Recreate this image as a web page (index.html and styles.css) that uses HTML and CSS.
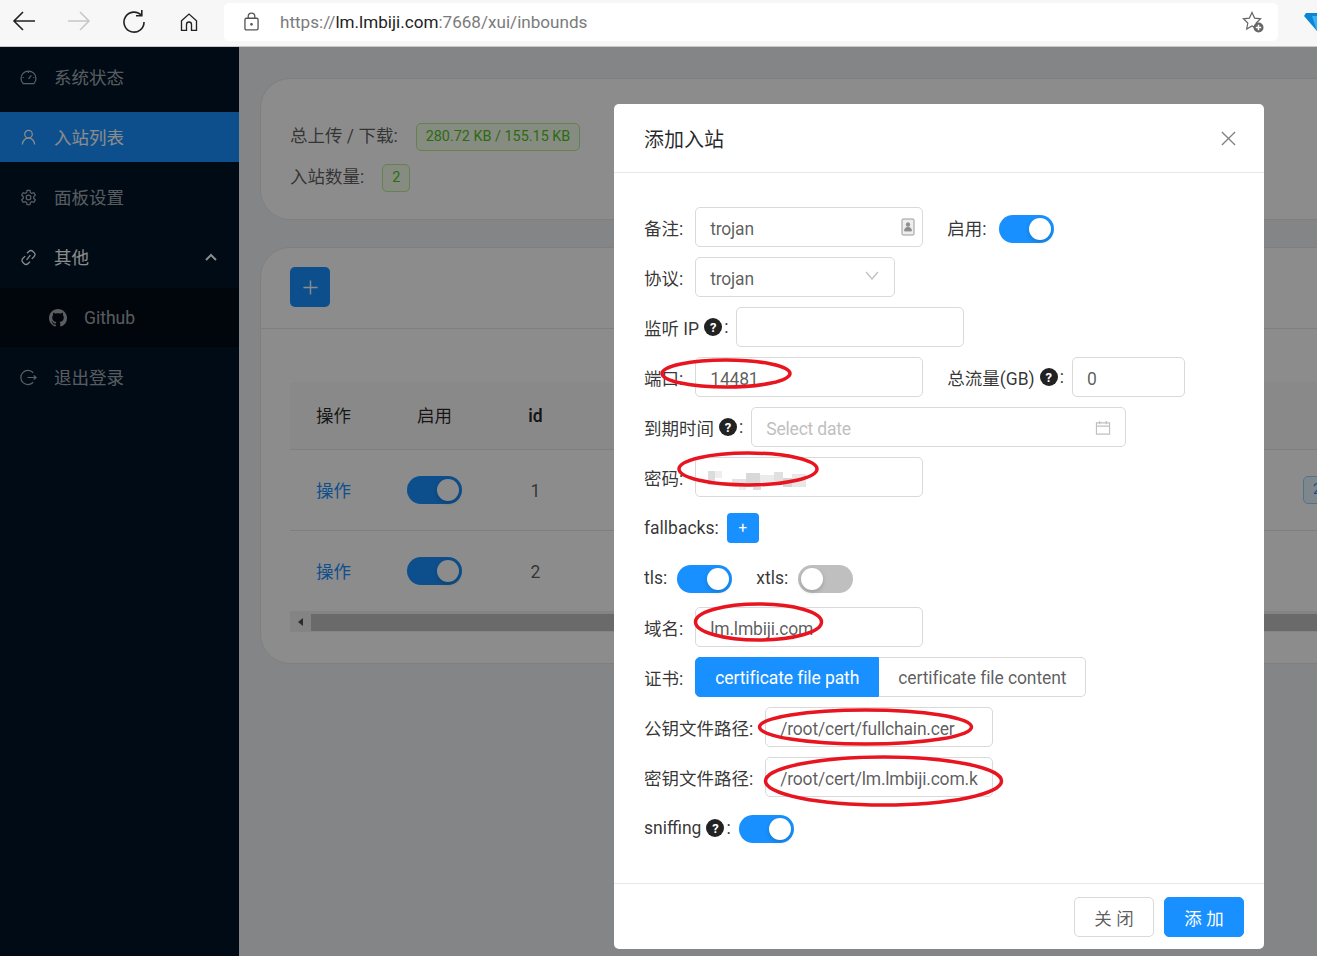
FILE: index.html
```html
<!DOCTYPE html>
<html lang="zh-CN">
<head>
  <meta charset="UTF-8">
  <meta name="viewport" content="width=device-width, initial-scale=1.0">
  <link rel="stylesheet" href="styles.css">
</head>
<body>
  <header class="browser-bar">
    <svg class="nav-icon nav-back" viewBox="0 0 24 24"><path d="M23 11H2M11 2l-9 9 9 9"/></svg>
    <svg class="nav-icon nav-forward" viewBox="0 0 24 24"><path d="M1 11h21M13 2l9 9-9 9"/></svg>
    <svg class="nav-icon nav-reload" viewBox="0 0 24 24"><path d="M19.5 5.5A10 10 0 1 0 22 12"/><path d="M14 5.8h5.8V0"/></svg>
    <svg class="nav-icon nav-home" viewBox="0 0 24 24"><path d="M3 10.5 12 2.5l9 8V22h-6v-7a3 3 0 0 0-6 0v7H3z"/></svg>
    <div class="address">
      <svg class="lock" viewBox="0 0 16 20"><rect x="1" y="6.5" width="14" height="12.5" rx="1.5"/><path d="M4.5 6.5V4.5a3.5 3.5 0 0 1 7 0v2"/><circle cx="8" cy="13" r=".8"/></svg>
      <span class="url">https://<b>lm.lmbiji.com</b>:7668/xui/inbounds</span>
      <svg class="fav" viewBox="0 0 22 22"><path d="M10 1.5l2.6 5.6 6 .7-4.4 4.2 1.1 6-5.3-3-5.3 3 1.1-6L1.4 7.800l6-.7z"/><circle class="fav-dot" cx="16.500" cy="16.500" r="5"/><path class="fav-plus" d="M16.500 13.800v5.400M13.800 16.500h5.400"/></svg>
    </div>
    <svg class="ext" viewBox="0 0 26 18"><path d="M2 0h22l2 3-13 15L0 3z"/><path class="ext-light" d="M8 3h10l-5 15z"/></svg>
  </header>

  <div class="app">
    <aside class="sider">
      <a class="menu-item">
        <svg class="menu-icon" viewBox="0 0 18 18"><path d="M3.300 15.500a7.900 7.900 0 1 1 11.400 0z"/><path d="M9 10.500l3-3.800M9 3v1.200M2.800 9H4M14 9h1.200"/></svg>
        <span>系统状态</span>
      </a>
      <a class="menu-item active">
        <svg class="menu-icon" viewBox="0 0 18 18"><circle cx="9" cy="5.500" r="4"/><path d="M2.500 16.500c0-3.600 2.900-7 6.500-7s6.500 3.400 6.500 7"/></svg>
        <span>入站列表</span>
      </a>
      <a class="menu-item">
        <svg class="menu-icon" viewBox="0 0 18 18"><path d="M7.500 1.500h3l.5 2.300 1.500.9 2.200-.7 1.500 2.600-1.700 1.600v1.600l1.700 1.600-1.500 2.600-2.200-.7-1.500.9-.5 2.300h-3l-.5-2.300-1.500-.9-2.200.7-1.500-2.600 1.700-1.600V8.200L1.800 6.600l1.500-2.600 2.200.7 1.500-.9z"/><circle cx="9" cy="9" r="2.500"/></svg>
        <span>面板设置</span>
      </a>
      <a class="menu-item open">
        <svg class="menu-icon" viewBox="0 0 18 18"><path d="M7.500 4.500l1.800-1.800a3.200 3.200 0 0 1 4.500 0l1 1a3.200 3.200 0 0 1 0 4.500l-2.300 2.300"/><path d="M10.500 13.500l-1.800 1.800a3.200 3.200 0 0 1-4.500 0l-1-1a3.200 3.200 0 0 1 0-4.500l2.300-2.300"/><path d="M7 11.500l4-5"/></svg>
        <span>其他</span>
        <svg class="chevron" viewBox="0 0 12 8"><path d="M1 7l5-5 5 5"/></svg>
      </a>
      <div class="submenu">
        <a class="menu-item sub-item">
          <svg class="menu-icon github" viewBox="0 0 16 16"><path d="M8 0C3.580 0 0 3.580 0 8c0 3.540 2.290 6.530 5.470 7.590.4.070.55-.17.55-.38 0-.19-.01-.82-.01-1.490-2.010.37-2.530-.49-2.690-.94-.09-.23-.48-.94-.82-1.130-.28-.15-.68-.52-.01-.53.63-.01 1.080.58 1.230.82.72 1.210 1.870.87 2.330.66.070-.52.28-.87.51-1.070-1.780-.2-3.640-.89-3.640-3.950 0-.87.31-1.590.82-2.150-.08-.2-.36-1.020.08-2.120 0 0 .67-.21 2.200.82.64-.18 1.320-.27 2-.27s1.360.09 2 .27c1.530-1.040 2.200-.82 2.200-.82.44 1.100.16 1.920.08 2.120.51.56.82 1.270.82 2.150 0 3.070-1.870 3.750-3.650 3.950.29.25.54.73.54 1.480 0 1.070-.01 1.930-.01 2.200 0 .21.15.46.55.38A8.013 8.013 0 0 0 16 8c0-4.420-3.580-8-8-8z"/></svg>
          <span>Github</span>
        </a>
      </div>
      <a class="menu-item">
        <svg class="menu-icon" viewBox="0 0 18 18"><path d="M14 4a7.500 7.500 0 1 0 0 10"/><path d="M8 9h9M14.500 6.800 17 9l-2.500 2.200"/></svg>
        <span>退出登录</span>
      </a>
    </aside>

    <main class="content">
      <section class="card stats">
        <div class="stat-row first"><span>总上传 / 下载:</span><span class="tag tag-green">280.72 KB / 155.15 KB</span></div>
        <div class="stat-row"><span>入站数量:</span><span class="tag tag-green">2</span></div>
      </section>

      <section class="card">
        <div class="card-head"><button class="add-btn"><svg viewBox="0 0 18 18"><path d="M9 1.500v15M1.500 9h15"/></svg></button></div>
        <div class="card-body">
          <div class="table-row table-head">
            <span>操作</span><span>启用</span><span class="cell-id">id</span>
          </div>
          <div class="table-row">
            <a class="link">操作</a><span class="cell-switch"><i class="switch on"></i></span><span class="cell-num">1</span><span class="cell-tag"><span class="tag tag-blue">2</span></span>
          </div>
          <div class="table-row">
            <a class="link">操作</a><span class="cell-switch"><i class="switch on"></i></span><span class="cell-num">2</span>
          </div>
          <div class="scrollbar">
            <span class="scroll-arrow"></span>
            <span class="scroll-thumb"></span>
          </div>
        </div>
      </section>
    </main>

    <div class="mask">
      <div class="modal">
        <div class="modal-head">
          <h2>添加入站</h2>
          <svg class="close" viewBox="0 0 16 16"><path d="M1 1l14 14M15 1 1 15"/></svg>
        </div>
        <form class="modal-body">
          <div class="form-row">
            <div class="form-item">
              <label class="cjk">备注:</label>
              <div class="field w228">
                <input type="text" value="trojan">
                <svg class="contact" viewBox="0 0 14 18"><rect x="1" y="1" width="12" height="16" rx="1"/><circle cx="7" cy="6.500" r="1.800"/><path d="M3.500 13c0-2.500 1.500-4 3.500-4s3.500 1.500 3.500 4z"/></svg>
              </div>
            </div>
            <div class="form-item">
              <label class="cjk">启用:</label>
              <i class="switch on"></i>
            </div>
          </div>
          <div class="form-row">
            <div class="form-item">
              <label class="cjk">协议:</label>
              <div class="field w200 select">
                <span>trojan</span>
                <svg class="arrow" viewBox="0 0 14 9"><path d="M1 1l6 7 6-7"/></svg>
              </div>
            </div>
          </div>
          <div class="form-row">
            <div class="form-item">
              <label class="tight">监听 IP<span class="help">?</span>:</label>
              <div class="field w228"><input type="text"></div>
            </div>
          </div>
          <div class="form-row">
            <div class="form-item">
              <label class="cjk">端口:</label>
              <div class="field w228"><input type="text" value="14481"></div>
            </div>
            <div class="form-item">
              <label class="tight">总流量(GB)<span class="help">?</span>:</label>
              <div class="field w113"><input type="text" value="0"></div>
            </div>
          </div>
          <div class="form-row">
            <div class="form-item">
              <label class="tight">到期时间<span class="help">?</span>:</label>
              <div class="field w375">
                <input type="text" placeholder="Select date">
                <svg class="calendar" viewBox="0 0 16 16"><path d="M1 3h14v12H1zM1 6.500h14M4.500 1v3.500M11.500 1v3.500"/></svg>
              </div>
            </div>
          </div>
          <div class="form-row">
            <div class="form-item">
              <label class="cjk">密码:</label>
              <div class="field w228">
                <input type="text">
                <svg class="mosaic" viewBox="0 0 98 21">
                  <rect x="0" y="2" width="7" height="14" fill="#dcdcdc"/>
                  <rect x="7" y="2" width="7" height="7" fill="#eeeeee"/>
                  <rect x="24" y="10" width="14" height="7" fill="#e2e2e2"/>
                  <rect x="31" y="14" width="7" height="7" fill="#ededed"/>
                  <rect x="38" y="4" width="14" height="14" fill="#d8d8d8"/>
                  <rect x="45" y="14" width="8" height="7" fill="#dddddd"/>
                  <rect x="52" y="6" width="14" height="9" fill="#ebebeb"/>
                  <rect x="66" y="3" width="9" height="9" fill="#e0e0e0"/>
                  <rect x="75" y="9" width="9" height="9" fill="#d5d5d5"/>
                  <rect x="84" y="5" width="14" height="13" fill="#e7e7e7"/>
                </svg>
              </div>
            </div>
          </div>
          <div class="form-row">
            <div class="form-item">
              <label class="latin tight">fallbacks:</label>
              <button type="button" class="mini-btn">+</button>
            </div>
          </div>
          <div class="form-row">
            <div class="form-item">
              <label class="latin">tls:</label>
              <i class="switch on"></i>
            </div>
            <div class="form-item">
              <label class="latin">xtls:</label>
              <i class="switch"></i>
            </div>
          </div>
          <div class="form-row">
            <div class="form-item">
              <label class="cjk">域名:</label>
              <div class="field w228"><input type="text" value="lm.lmbiji.com"></div>
            </div>
          </div>
          <div class="form-row">
            <div class="form-item">
              <label class="cjk">证书:</label>
              <div class="radio-group">
                <span class="radio active">certificate file path</span>
                <span class="radio">certificate file content</span>
              </div>
            </div>
          </div>
          <div class="form-row">
            <div class="form-item">
              <label class="cjk">公钥文件路径:</label>
              <div class="field w228"><input type="text" value="/root/cert/fullchain.cer"></div>
            </div>
          </div>
          <div class="form-row">
            <div class="form-item">
              <label class="cjk">密钥文件路径:</label>
              <div class="field w228"><input type="text" value="/root/cert/lm.lmbiji.com.key"></div>
            </div>
          </div>
          <div class="form-row">
            <div class="form-item">
              <label class="latin tight">sniffing<span class="help">?</span>:</label>
              <i class="switch on"></i>
            </div>
          </div>
        </form>
        <div class="modal-foot">
          <button class="btn">关 闭</button>
          <button class="btn btn-primary">添 加</button>
        </div>
      </div>
    </div>
  </div>

  <svg class="marks" viewBox="0 0 1317 956">
    <ellipse cx="726" cy="373.500" rx="64" ry="13.500"/>
    <ellipse cx="748" cy="469" rx="69" ry="16"/>
    <ellipse cx="758.500" cy="622" rx="63" ry="18"/>
    <ellipse cx="865.500" cy="727" rx="106" ry="17"/>
    <ellipse cx="883.500" cy="781" rx="118" ry="24"/>
  </svg>
</body>
</html>
```

FILE: styles.css
```css
* {
  box-sizing: border-box;
}
html, body {
  height: 100%;
}
body {
  position: relative;
  margin: 0;
  overflow: hidden;
  font-family: Roboto, "Noto Sans CJK SC", sans-serif;
  font-size: 17.5px;
  color: rgba(0, 0, 0, 0.65);
  background-color: #f0f2f5;
}
.browser-bar {
  display: flex;
  align-items: center;
  height: 47px;
  padding-bottom: 3px;
  background-color: #f7f7f7;
  border-bottom: 1px solid #c9c9c9;
  overflow: hidden;
}
.nav-icon {
  flex: none;
  width: 24px;
  height: 24px;
  fill: none;
  stroke: #222;
  stroke-width: 1.6;
}
.nav-back {
  margin-left: 12px;
}
.nav-forward {
  margin-left: 31px;
  stroke: #c8c8c8;
}
.nav-reload {
  margin-left: 31px;
}
.nav-home {
  width: 20px;
  height: 20px;
  margin-left: 33px;
}
.address {
  display: flex;
  flex: none;
  align-items: center;
  width: 1054px;
  height: 38px;
  margin-left: 25px;
  padding: 0 14px 0 20px;
  background-color: white;
  border-radius: 5px;
}
.lock {
  width: 15px;
  height: 19px;
  fill: none;
  stroke: #555;
  stroke-width: 1.4;
}
.url {
  flex: 1;
  margin-left: 21px;
  font-size: 17.1px;
  color: #7b7b7b;
}
.url b {
  font-weight: 400;
  color: #222;
}
.fav {
  width: 22px;
  height: 22px;
  fill: none;
  stroke: #666;
  stroke-width: 1.2;
}
.fav-dot {
  fill: #666;
  stroke: none;
}
.fav-plus {
  stroke: white;
  stroke-width: 1.5;
}
.ext {
  flex: none;
  width: 26px;
  height: 18px;
  margin-left: 26px;
  fill: #0b86d6;
}
.ext-light {
  fill: #35b4f5;
}

.app {
  position: relative;
  display: flex;
  height: 909px;
  overflow: hidden;
}
.sider {
  flex: none;
  width: 239px;
  padding-top: 5px;
  background-color: #001529;
}
.menu-item {
  display: flex;
  align-items: center;
  height: 50px;
  margin-bottom: 10px;
  padding-left: 20px;
  color: rgba(255, 255, 255, 0.65);
}
.menu-item span {
  margin-bottom: 1px;
}
.menu-item.active {
  color: white;
  background-color: #1890ff;
}
.menu-item.open {
  margin-bottom: 6px;
  color: white;
}
.menu-icon {
  flex: none;
  width: 17px;
  height: 17px;
  margin-right: 17px;
  fill: none;
  stroke: currentColor;
  stroke-width: 1.3;
}
.github {
  width: 18px;
  height: 18px;
  fill: currentColor;
  stroke: none;
}
.chevron {
  width: 12px;
  height: 8px;
  margin-left: auto;
  margin-right: 22px;
  fill: none;
  stroke: currentColor;
  stroke-width: 2;
}
.submenu {
  height: 59px;
  margin-bottom: 5px;
  background-color: #000c17;
}
.sub-item {
  height: 59px;
  padding-left: 49px;
}
.sub-item span {
  margin-bottom: 0;
}

.content {
  flex: 1;
  min-width: 0;
  padding: 31px 0 0 21px;
  overflow: hidden;
}
.card {
  width: 1300px;
  margin-bottom: 27px;
  background-color: white;
  border: 1px solid #e8e8e8;
  border-radius: 30px;
}
.stats {
  display: flex;
  flex-direction: column;
  gap: 12px;
  height: 142px;
  padding: 43px 29px 0;
}
.stat-row {
  display: flex;
  align-items: center;
  gap: 18px;
}
.stat-row > span:first-child {
  margin-bottom: 4px;
}
.tag {
  display: inline-block;
  height: 28px;
  padding: 0 9px;
  font-size: 14.4px;
  line-height: 26px;
  border-radius: 5px;
}
.tag-green {
  color: #52c41a;
  background-color: #f6ffed;
  border: 1px solid #b7eb8f;
}
.tag-blue {
  color: #1890ff;
  background-color: #e6f7ff;
  border: 1px solid #91d5ff;
}
.card-head {
  height: 81px;
  padding: 19px 29px 0;
  border-bottom: 1px solid #e8e8e8;
}
.add-btn {
  display: flex;
  align-items: center;
  justify-content: center;
  width: 40px;
  height: 40px;
  padding: 0;
  background-color: #1890ff;
  border: none;
  border-radius: 5px;
}
.add-btn svg {
  width: 17px;
  height: 17px;
  fill: none;
  stroke: white;
  stroke-width: 1.5;
}
.card-body {
  padding: 53px 0 31px 29px;
}
.table-row {
  display: grid;
  grid-template-columns: 87px 115px 87px 724px 60px;
  align-items: center;
  height: 81px;
  text-align: center;
  border-bottom: 1px solid #e8e8e8;
}
.table-row > a {
  margin-bottom: 1px;
}
.cell-num {
  margin-top: 1px;
}
.table-head {
  height: 68px;
  color: rgba(0, 0, 0, 0.85);
  background-color: #fafafa;
}
.table-head > span {
  margin-bottom: 2px;
}
.table-row:nth-child(3) {
  border-bottom: none;
  height: 80px;
}
.table-head > .cell-id {
  margin-bottom: 0;
  font-weight: 600;
}
.cell-switch {
  display: flex;
  justify-content: center;
}
.cell-tag {
  grid-column: 5;
  text-align: left;
}
.link {
  color: #1890ff;
}
.scrollbar {
  display: flex;
  align-items: center;
  height: 21px;
  padding-top: 1px;
  background-color: #f1f1f1;
}
.scroll-arrow {
  width: 21px;
  height: 17px;
  background-color: #f1f1f1;
  position: relative;
}
.scroll-arrow::before {
  content: "";
  position: absolute;
  top: 4px;
  left: 8px;
  border: 4px solid transparent;
  border-left-width: 0;
  border-right: 5px solid #505050;
}
.scroll-thumb {
  flex: 1;
  height: 17px;
  background-color: #c1c1c1;
}

.switch {
  display: inline-block;
  position: relative;
  flex: none;
  width: 55px;
  height: 28px;
  margin-top: 4px;
  background-color: #bfbfbf;
  border-radius: 14px;
}
.switch::after {
  content: "";
  position: absolute;
  top: 3px;
  left: 3px;
  width: 22px;
  height: 22px;
  background-color: white;
  border-radius: 50%;
  box-shadow: 0 2px 4px rgba(0, 35, 11, 0.2);
}
.switch.on {
  background-color: #1890ff;
}
.switch.on::after {
  left: 30px;
}
.table-row .switch {
  margin-top: 0;
}

.mask {
  position: absolute;
  inset: 0;
  padding: 57px 0 0 614px;
  background-color: rgba(0, 0, 0, 0.45);
}
.modal {
  width: 650px;
  height: 845px;
  background-color: white;
  border-radius: 5px;
}
.modal-head {
  display: flex;
  align-items: center;
  justify-content: space-between;
  height: 69px;
  padding: 0 28px 0 30px;
  border-bottom: 1px solid #e8e8e8;
}
.modal-head h2 {
  margin: 0;
  font-size: 20px;
  font-weight: 400;
  color: rgba(0, 0, 0, 0.85);
}
.close {
  width: 15px;
  height: 15px;
  fill: none;
  stroke: #808080;
  stroke-width: 1.4;
}
.modal-body {
  height: 710px;
  padding: 34px 30px 0;
}
.form-row {
  display: flex;
  gap: 24px;
  height: 40px;
  margin-bottom: 10px;
}
.form-item {
  display: flex;
  align-items: center;
}
.form-item label {
  display: flex;
  align-items: center;
  margin-right: 10px;
  white-space: pre;
  color: rgba(0, 0, 0, 0.8);
}
.form-item label.cjk {
  margin-right: 12px;
}
.form-item label.tight {
  margin-right: 8px;
}
.form-item label.latin {
  padding-top: 2px;
}
.help {
  display: inline-flex;
  align-items: center;
  justify-content: center;
  width: 18px;
  height: 18px;
  margin: 0 2px 0 5px;
  font-size: 13px;
  font-weight: 700;
  color: white;
  background-color: #222;
  border-radius: 50%;
}
.field {
  position: relative;
  height: 40px;
}
.w113 {
  width: 113px;
}
.w200 {
  width: 200px;
}
.w228 {
  width: 228px;
}
.w375 {
  width: 375px;
}
.field input {
  width: 100%;
  height: 100%;
  padding: 3px 14px 0;
  font: inherit;
  letter-spacing: -0.2px;
  color: rgba(0, 0, 0, 0.65);
  background-color: white;
  border: 1px solid #d9d9d9;
  border-radius: 5px;
}
.field input::placeholder {
  color: #bfbfbf;
}
.select {
  display: flex;
  align-items: center;
  justify-content: space-between;
  padding: 3px 15px 0 14px;
  letter-spacing: -0.2px;
  border: 1px solid #d9d9d9;
  border-radius: 5px;
}
.arrow {
  width: 14px;
  height: 9px;
  margin-bottom: 6px;
  fill: none;
  stroke: #bfbfbf;
  stroke-width: 1.2;
}
.contact {
  position: absolute;
  top: 11px;
  right: 8px;
  width: 14px;
  height: 18px;
  fill: #8a8a8a;
  stroke: #9a9a9a;
}
.contact rect {
  fill: #eeeeee;
}
.calendar {
  position: absolute;
  top: 13px;
  right: 15px;
  width: 16px;
  height: 15px;
  fill: none;
  stroke: #bfbfbf;
  stroke-width: 1.2;
}
.mosaic {
  position: absolute;
  top: 12px;
  left: 13px;
  width: 98px;
  height: 21px;
}
.mini-btn {
  width: 32px;
  height: 30px;
  margin-top: 2px;
  padding: 0;
  font: inherit;
  font-size: 15px;
  color: white;
  background-color: #1890ff;
  border: none;
  border-radius: 4px;
}
.radio-group {
  display: flex;
  height: 40px;
}
.radio {
  padding: 0 19px;
  line-height: 40px;
  letter-spacing: -0.1px;
  background-color: white;
  border: 1px solid #d9d9d9;
  border-left: none;
  border-radius: 0 5px 5px 0;
}
.radio.active {
  color: white;
  background-color: #1890ff;
  border: 1px solid #1890ff;
  border-radius: 5px 0 0 5px;
}
.modal-foot {
  display: flex;
  justify-content: flex-end;
  gap: 10px;
  height: 66px;
  padding: 13px 20px 0;
  border-top: 1px solid #e8e8e8;
}
.btn {
  width: 80px;
  height: 40px;
  padding: 0;
  font: inherit;
  color: rgba(0, 0, 0, 0.65);
  background-color: white;
  border: 1px solid #d9d9d9;
  border-radius: 5px;
}
.btn-primary {
  color: white;
  background-color: #1890ff;
  border-color: #1890ff;
}
.marks {
  position: absolute;
  top: 0;
  left: 0;
  width: 1317px;
  height: 956px;
  pointer-events: none;
  fill: none;
  stroke: #e8141f;
  stroke-width: 3.5;
}
```
